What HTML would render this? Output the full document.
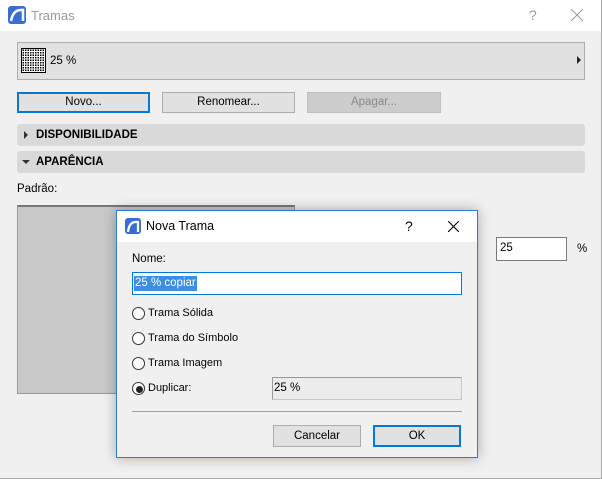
<!DOCTYPE html><html><head><style>
*{box-sizing:border-box;margin:0;padding:0}
body{width:602px;height:479px;background:#f0f0f0;font-family:"Liberation Sans",sans-serif;font-size:11px;color:#000;position:relative;overflow:hidden}
.a{position:absolute}
.btn{position:absolute;border:1px solid #adadad;background:#e1e1e1;text-align:center;line-height:18px;font-size:11.5px}
.bar{position:absolute;left:17px;width:568px;height:22px;background:#d9d9d9;border-radius:3px;font-weight:bold;font-size:11.5px;line-height:22px;padding-left:19px}
.radio{position:absolute;left:132px;width:13px;height:13px;border:1px solid #333;border-radius:50%;background:#fff}
.rl{position:absolute;left:148px;font-size:11px}
</style></head><body>
<div class="a" style="left:0;top:0;width:602px;height:479px;border-right:1px solid #aaa;border-bottom:1px solid #aaa"></div>
<div class="a" style="left:0;top:0;width:601px;height:31px;background:#fff"></div>
<svg class="a" style="left:8px;top:6px" width="18" height="18"><rect width="18" height="18" rx="3" fill="#3a6fd1"/><path d="M3 15 Q5 4 13 4 L15 4 L15 15" stroke="#fff" stroke-width="2.5" fill="none"/></svg>
<div class="a" style="left:31px;top:8px;font-size:13px;color:#999">Tramas</div>
<div class="a" style="left:529px;top:7px;font-size:14px;color:#999">?</div>
<svg class="a" style="left:571px;top:9px" width="12" height="12"><path d="M0 0L12 12M12 0L0 12" stroke="#999" stroke-width="1"/></svg>
<div class="a" style="left:17px;top:42px;width:568px;height:38px;background:#e1e1e1;border:1px solid #adadad"></div>
<div class="a" style="left:21px;top:48px;width:25px;height:25px;border:1px solid #000;background:#fff radial-gradient(circle,#000 0.8px,transparent 0.9px) 0 0/2.5px 2.5px"></div>
<div class="a" style="left:50px;top:55px;font-size:11.5px">25 %</div>
<div class="a" style="left:577px;top:56px;border-left:4px solid #222;border-top:4px solid transparent;border-bottom:4px solid transparent"></div>
<div class="btn" style="left:17px;top:92px;width:133px;height:21px;border:2px solid #0078d7;line-height:17px">Novo...</div>
<div class="btn" style="left:162px;top:92px;width:133px;height:21px">Renomear...</div>
<div class="btn" style="left:307px;top:92px;width:134px;height:21px;background:#ccc;border-color:#bfbfbf;color:#888">Apagar...</div>
<div class="bar" style="top:124px">DISPONIBILIDADE</div>
<div class="a" style="left:24px;top:131px;border-left:4px solid #333;border-top:4px solid transparent;border-bottom:4px solid transparent"></div>
<div class="bar" style="top:151px">APARÊNCIA</div>
<div class="a" style="left:22px;top:160px;border-top:4px solid #333;border-left:4px solid transparent;border-right:4px solid transparent"></div>
<div class="a" style="left:17px;top:183px;font-size:11.5px">Padrão:</div>
<div class="a" style="left:17px;top:205px;width:278px;height:189px;background:#c8c8c8;border:1px solid #999;border-top:2px solid #777"></div>
<div class="a" style="left:496px;top:237px;width:71px;height:24px;background:#fff;border:1px solid #7a7a7a;padding:4px 3px;font-size:11.5px">25</div>
<div class="a" style="left:577px;top:243px;font-size:11.5px">%</div>
<div class="a" style="left:116px;top:210px;width:362px;height:248px;background:#f0f0f0;border:1px solid #2a7bd4;box-shadow:0 0 12px rgba(0,0,0,.3)"></div>
<div class="a" style="left:117px;top:211px;width:360px;height:31px;background:#fff"></div>
<svg class="a" style="left:125px;top:218px" width="16" height="16"><rect width="16" height="16" rx="3" fill="#3a6fd1"/><path d="M3 14 Q4 4 11 4 L13 4 L13 14" stroke="#fff" stroke-width="2.2" fill="none"/></svg>
<div class="a" style="left:146px;top:219px;font-size:12.5px">Nova Trama</div>
<div class="a" style="left:405px;top:218px;font-size:14px">?</div>
<svg class="a" style="left:448px;top:221px" width="11" height="11"><path d="M0 0L11 11M11 0L0 11" stroke="#000" stroke-width="1.1"/></svg>
<div class="a" style="left:132px;top:253px;font-size:11.5px">Nome:</div>
<div class="a" style="left:132px;top:272px;width:330px;height:23px;background:#fff;border:1px solid #0078d7"></div>
<div class="a" style="left:134px;top:276px;height:15px;background:#3a8ee6;color:#fff;font-size:11.5px;padding:0 1px;line-height:15px">25 % copiar</div>
<div class="radio" style="top:307px"></div><div class="rl" style="top:307px">Trama Sólida</div>
<div class="radio" style="top:332px"></div><div class="rl" style="top:332px">Trama do Símbolo</div>
<div class="radio" style="top:357px"></div><div class="rl" style="top:357px">Trama Imagem</div>
<div class="radio" style="top:382px"></div><div class="a" style="left:136px;top:386px;width:7px;height:7px;border-radius:50%;background:#222"></div>
<div class="rl" style="top:382px">Duplicar:</div>
<div class="a" style="left:272px;top:377px;width:190px;height:23px;background:#ececec;border:1px solid #c8c8c8;border-top-color:#999;border-left-color:#999;padding:4px 1px;font-size:11.5px">25 %</div>
<div class="a" style="left:132px;top:411px;width:330px;height:1px;background:#a0a0a0"></div>
<div class="btn" style="left:273px;top:425px;width:88px;height:22px;line-height:20px">Cancelar</div>
<div class="btn" style="left:373px;top:425px;width:88px;height:22px;border:2px solid #0078d7;line-height:18px">OK</div>
</body></html>
